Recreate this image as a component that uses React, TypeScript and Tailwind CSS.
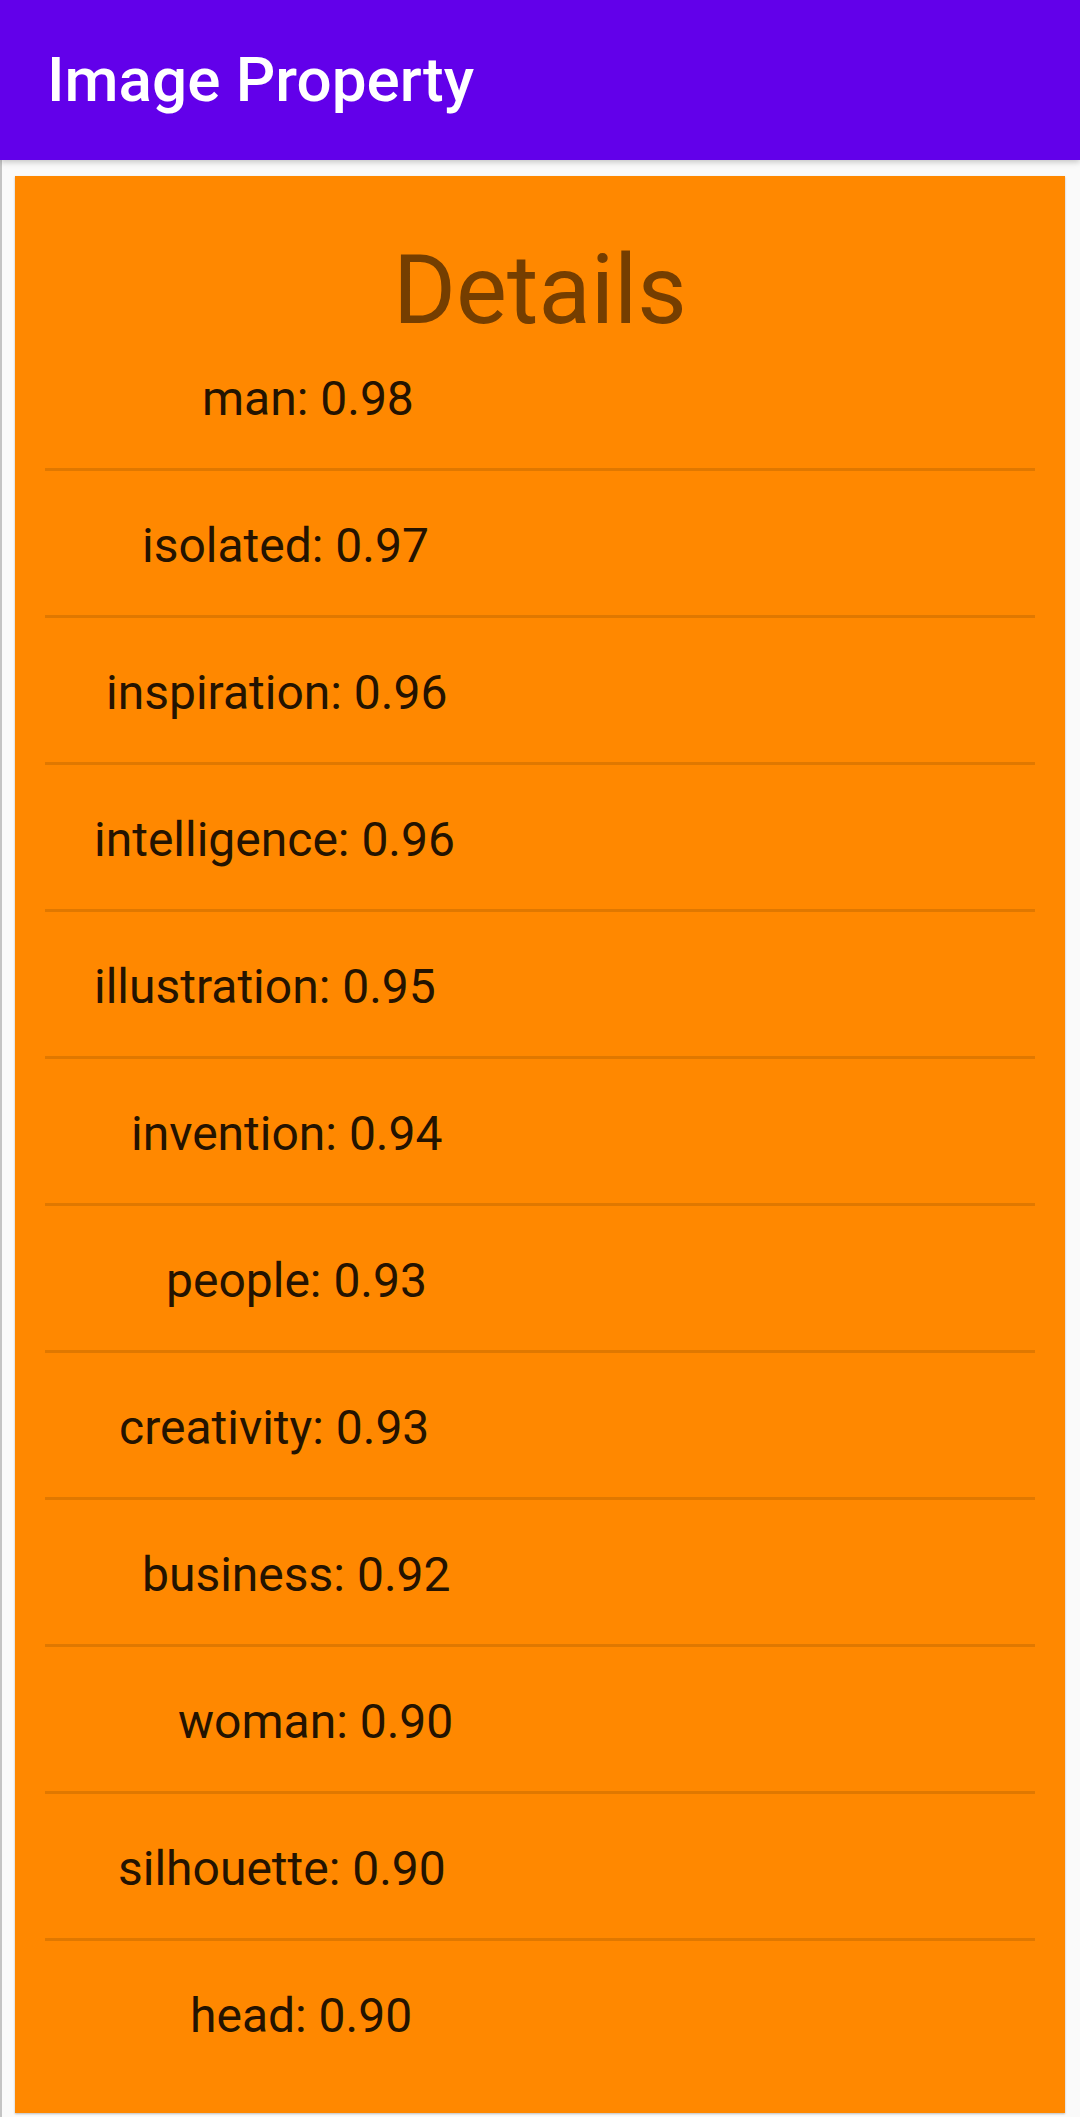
import React from "react";

const items: { label: string; pad: number }[] = [
  { label: "man: 0.98", pad: 187 },
  { label: "isolated: 0.97", pad: 127 },
  { label: "inspiration: 0.96", pad: 91 },
  { label: "intelligence: 0.96", pad: 79 },
  { label: "illustration: 0.95", pad: 79 },
  { label: "invention: 0.94", pad: 116 },
  { label: "people: 0.93", pad: 151 },
  { label: "creativity: 0.93", pad: 104 },
  { label: "business: 0.92", pad: 127 },
  { label: "woman: 0.90", pad: 163 },
  { label: "silhouette: 0.90", pad: 103 },
  { label: "head: 0.90", pad: 175 },
];

export default function App() {
  return (
    <div
      className="w-[1080px] h-[2117px] bg-[#fafafa] flex flex-col overflow-hidden"
      style={{ fontFamily: "Roboto, 'Noto Sans', sans-serif" }}
    >
      <header className="relative z-10 h-[160px] shrink-0 bg-[#6200ea] flex items-center pl-[47px] shadow-[0_2px_6px_rgba(0,0,0,0.22)]">
        <h1 className="text-white text-[62px] font-medium leading-none">Image Property</h1>
      </header>
      <main className="flex-1 border-l-2 border-[#c4c4c4] pl-[13px] pr-[15px] pt-[16px]">
        <section className="bg-[#ff8800] h-[1937px] pt-[80px] pb-[28px] shadow-[0_1px_2px_rgba(0,0,0,0.25)]">
          <h2 className="text-center text-[96px] leading-[68px] text-[#753e00] font-normal">Details</h2>
          <div className="flex flex-col">
            {items.map((it, i) => (
              <div key={it.label} className="flex flex-col">
                <div className="h-[144px] flex items-center pt-[5px]">
                  <span
                    className="text-[48px] leading-none text-[#241300]"
                    style={{ paddingLeft: it.pad }}
                  >
                    {it.label}
                  </span>
                </div>
                {i < items.length - 1 && <div className="h-[3px] mx-[30px] bg-[#e07800]" />}
              </div>
            ))}
          </div>
        </section>
      </main>
    </div>
  );
}
